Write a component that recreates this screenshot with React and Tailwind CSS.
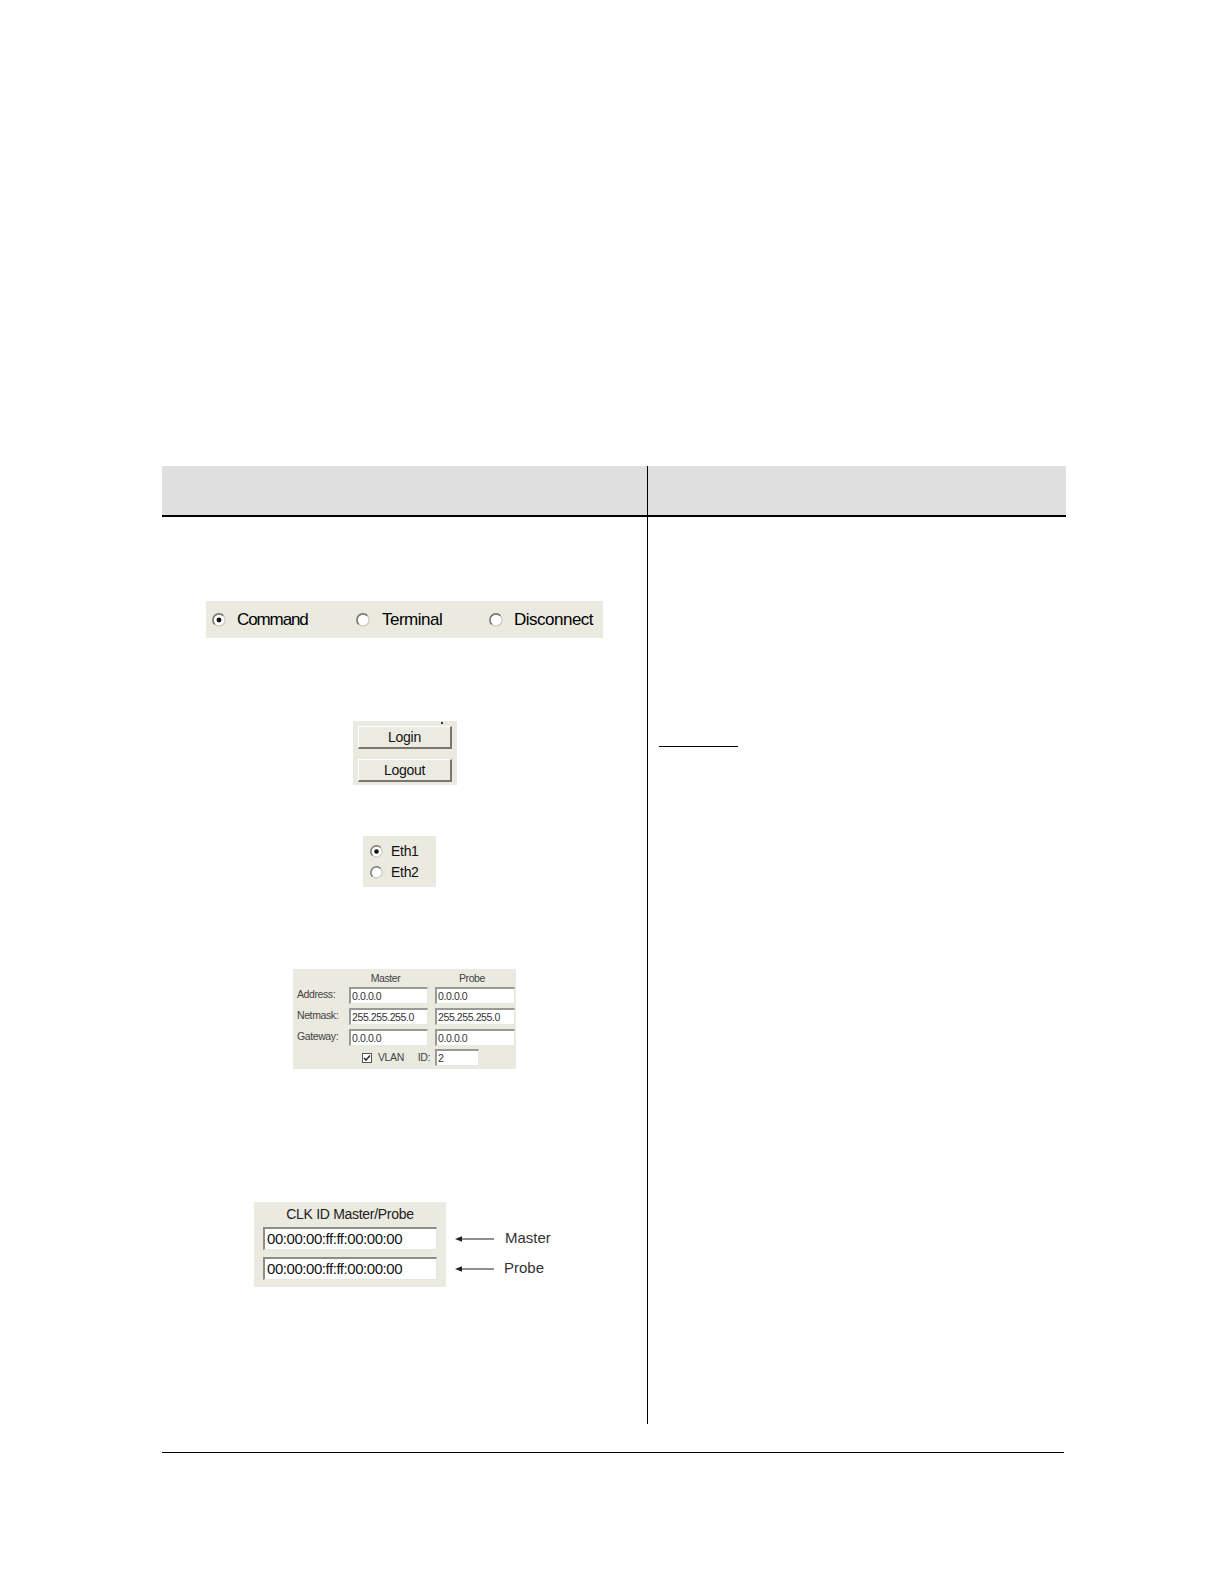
import React from 'react';

function Radio({ checked, size = 14 }) {
  return (
    <svg width={size} height={size} viewBox="0 0 13 13" className="shrink-0">
      <circle cx="6.5" cy="6.5" r="5.6" fill="#ffffff" stroke="#c9c8bd" strokeWidth="1.1" />
      <path d="M2.5 10.5 A5.6 5.6 0 0 1 10.5 2.5" fill="none" stroke="#7d7c73" strokeWidth="1.5" />
      {checked && <circle cx="6.5" cy="6.5" r="2.3" fill="#111111" />}
    </svg>
  );
}

function Arrow() {
  return (
    <svg width="40" height="10" viewBox="0 0 40 10" className="shrink-0">
      <line x1="4" y1="5" x2="39" y2="5" stroke="#222" strokeWidth="1.2" />
      <path d="M0 5 L7 2.2 L7 7.8 Z" fill="#222" />
    </svg>
  );
}

function SmallInput({ value, className = '' }) {
  return (
    <div
      className={`h-[17px] bg-white border-t-2 border-l-2 border-t-[#9a9a94] border-l-[#9a9a94] border-r border-b border-r-[#e8e8e2] border-b-[#e8e8e2] pl-[1px] text-[10.5px] leading-[14px] text-[#333] tracking-[-0.4px] ${className}`}
    >
      {value}
    </div>
  );
}

function ModeBar() {
  return (
    <div className="ml-[44px] mt-[84px] w-[397px] h-[37px] bg-[#ebeae0] flex items-center pl-[6px] text-[17px] tracking-[-0.5px] text-black">
      <div className="w-[144px] flex items-center gap-[11px]">
        <Radio checked />
        <span className="tracking-[-1.1px]">Command</span>
      </div>
      <div className="w-[133px] flex items-center gap-[12px]">
        <Radio />
        <span>Terminal</span>
      </div>
      <div className="flex items-center gap-[11px]">
        <Radio />
        <span>Disconnect</span>
      </div>
    </div>
  );
}

function XpButton({ label }) {
  return (
    <div className="w-[94px] h-[23px] bg-[#ecebe2] border-t border-l border-t-white border-l-white border-r-2 border-b-2 border-r-[#77776f] border-b-[#77776f] flex items-center justify-center text-[14px] tracking-[-0.3px] text-[#111]">
      {label}
    </div>
  );
}

function LoginPanel() {
  return (
    <div className="ml-[191px] mt-[83px] w-[104px] h-[64px] bg-[#ebeae0] relative flex flex-col items-center pt-[5px] gap-[10px]">
      <div className="absolute right-[14px] top-[1px] w-[2px] h-[2px] bg-[#333]" />
      <XpButton label="Login" />
      <XpButton label="Logout" />
    </div>
  );
}

function EthPanel() {
  return (
    <div className="ml-[201px] mt-[51px] w-[73px] h-[51px] bg-[#ebeae0] flex flex-col pl-[7px] pt-[8px] gap-[6px] text-[14px] tracking-[-0.3px] text-[#111] leading-[15px]">
      <div className="flex items-center gap-[8px]">
        <Radio checked size={13} />
        <span>Eth1</span>
      </div>
      <div className="flex items-center gap-[8px]">
        <Radio size={13} />
        <span>Eth2</span>
      </div>
    </div>
  );
}

function AddressPanel() {
  const rows = [
    ['Address:', '0.0.0.0', '0.0.0.0'],
    ['Netmask:', '255.255.255.0', '255.255.255.0'],
    ['Gateway:', '0.0.0.0', '0.0.0.0'],
  ];
  return (
    <div className="ml-[131px] mt-[82px] w-[223px] h-[100px] bg-[#ebeae0] pl-[4px] pt-[4px] text-[10.5px] text-[#444] tracking-[-0.4px]">
      <div className="grid grid-cols-[45px_79px_80px] gap-x-[7px] gap-y-[4px] items-center">
        <div />
        <div className="text-center leading-[10px] pr-[6px]">Master</div>
        <div className="text-center leading-[10px] pr-[6px]">Probe</div>
        {rows.map(([label, a, b]) => (
          <React.Fragment key={label}>
            <div className="leading-[12px] -mt-[3px]">{label}</div>
            <SmallInput value={a} />
            <SmallInput value={b} />
          </React.Fragment>
        ))}
      </div>
      <div className="flex items-center mt-[3px]">
        <div className="ml-[65px] w-[10px] h-[10px] border border-[#555] bg-white flex items-center justify-center">
          <svg width="8" height="8" viewBox="0 0 8 8">
            <path d="M1 4 L3 6.2 L7 1.5" fill="none" stroke="#222" strokeWidth="1.4" />
          </svg>
        </div>
        <span className="ml-[6px]">VLAN</span>
        <span className="ml-[14px]">ID:</span>
        <SmallInput value="2" className="ml-[5px] w-[44px] h-[16px]" />
      </div>
    </div>
  );
}

function ClkInput({ value }) {
  return (
    <div className="h-[23px] bg-white border-t-2 border-l-2 border-t-[#8d8d86] border-l-[#8d8d86] border-r border-b border-r-[#e6e6e0] border-b-[#e6e6e0] pl-[2px] flex items-center text-[15px] tracking-[-0.45px] text-[#111]">
      {value}
    </div>
  );
}

function ClkPanel() {
  return (
    <div className="ml-[92px] mt-[133px] flex">
      <div className="w-[192px] h-[85px] bg-[#ebeae0] px-[9px] flex flex-col">
        <div className="h-[25px] flex items-center justify-center text-[14px] tracking-[-0.3px] text-[#222]">
          CLK ID Master/Probe
        </div>
        <div className="flex flex-col gap-[7px]">
          <ClkInput value="00:00:00:ff:ff:00:00:00" />
          <ClkInput value="00:00:00:ff:ff:00:00:00" />
        </div>
      </div>
      <div className="pt-[25px] pl-[9px] flex flex-col gap-[7px] text-[15px] text-[#333]">
        <div className="h-[23px] flex items-center">
          <Arrow />
          <span className="ml-[10px]">Master</span>
        </div>
        <div className="h-[23px] flex items-center">
          <Arrow />
          <span className="ml-[9px]">Probe</span>
        </div>
      </div>
    </div>
  );
}

export default function App() {
  return (
    <div className="w-full bg-white font-['Liberation_Sans',Arial,sans-serif] pb-[40px]">
      <div className="pt-[466px] pl-[162px]">
        <div className="w-[904px] flex flex-col">
          {/* header row */}
          <div className="flex h-[51px] bg-[#dfdfdf] border-b-2 border-black">
            <div className="w-[486px] border-r border-black" />
            <div className="flex-1" />
          </div>
          {/* body row */}
          <div className="flex h-[907px]">
            <div className="w-[486px] border-r border-black flex flex-col items-start">
              <ModeBar />
              <LoginPanel />
              <EthPanel />
              <AddressPanel />
              <ClkPanel />
            </div>
            <div className="flex-1 pl-[11px]">
              <div className="mt-[229px] w-[79px] h-[1px] bg-black" />
            </div>
          </div>
        </div>
        <div className="mt-[28px] w-[902px] h-[1px] bg-black" />
      </div>
    </div>
  );
}
